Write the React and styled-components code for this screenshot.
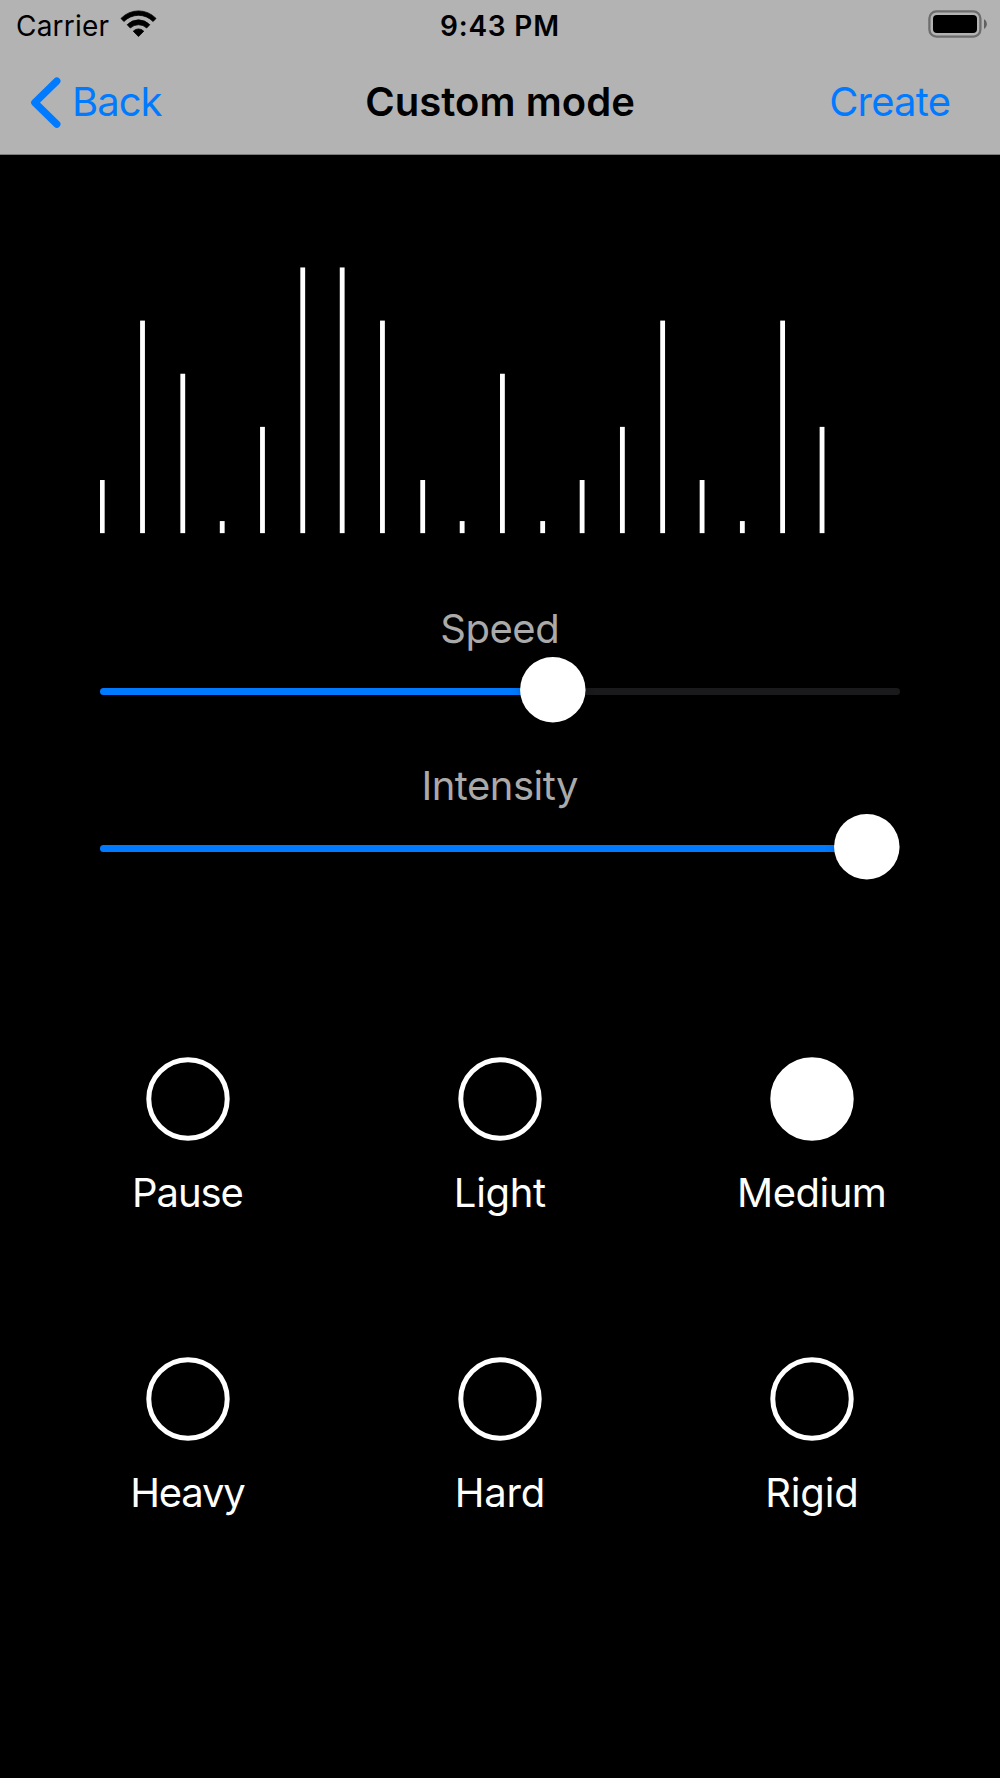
import React, { useState } from "react";
import styled, { createGlobalStyle } from "styled-components";

const GlobalStyle = createGlobalStyle`
  * { box-sizing: border-box; }
  body {
    margin: 0;
    background: #000;
    font-family: "Inter", "Liberation Sans", sans-serif;
  }
  button {
    padding: 0;
    border: 0;
    background: none;
    color: inherit;
    font: inherit;
  }
`;

const Screen = styled.div`
  width: 1000px;
  height: 1778px;
  background: #000;
  overflow: hidden;
`;

/* Text whose trailing letter space is taken back, so that it centres on its glyphs. */
const Text = styled.span`
  display: block;
  font-size: 40px;
  line-height: 49px;
  white-space: nowrap;
  letter-spacing: ${(p) => p.$tracking || 0}px;
  margin-right: ${(p) => -(p.$tracking || 0)}px;
`;

const Header = styled.header`
  height: 155px;
  background: #b3b3b3;
  border-bottom: 1px solid #7c7c7c;
`;

const StatusBar = styled.div`
  display: grid;
  grid-template-columns: 1fr auto 1fr;
  align-items: start;
  height: 50px;
  padding: 9px 13px 0 12px;
  color: #000;
`;

const StatusText = styled(Text)`
  font-size: 28px;
  line-height: 34px;
  font-weight: ${(p) => p.$weight || 400};
`;

const Carrier = styled.div`
  display: flex;
  gap: 11px;
  padding-left: 4px;

  svg {
    margin-top: 1px;
  }
`;

const BatterySlot = styled.div`
  display: flex;
  justify-content: flex-end;
  padding-top: 1px;
`;

const NavBar = styled.nav`
  display: grid;
  grid-template-columns: 1fr auto 1fr;
  align-items: center;
  height: 103px;
  padding: 0 30px;
`;

const NavButton = styled.button`
  display: flex;
  align-items: center;
  justify-self: ${(p) => p.$side};
  gap: 10px;
  margin-right: ${(p) => (p.$side === "end" ? 19 : 0)}px;
  color: #007aff;
`;

const Title = styled(Text)`
  color: #000;
  font-weight: 600;
`;

const Main = styled.main`
  display: flex;
  flex-direction: column;
  padding: 112px 32px 0;
`;

const Chart = styled.svg`
  display: block;
  width: 800px;
  height: 267px;
  margin: 0 68px 70px;
`;

const Controls = styled.section`
  display: flex;
  flex-direction: column;
  gap: 38px;
  margin: 0 68px 177px;
`;

const Control = styled.div`
  display: flex;
  flex-direction: column;
  align-items: center;
  gap: 4px;
`;

const ControlLabel = styled(Text)`
  color: #aaa;
`;

const SliderBox = styled.div`
  position: relative;
  width: 800px;
  height: 66px;
  padding-top: 31px;
`;

const Track = styled.div`
  height: 7px;
  border-radius: 4px;
  background: #1a1a1c;
`;

const Fill = styled.div`
  height: 7px;
  border-radius: 4px;
  background: #007aff;
`;

const Thumb = styled.div`
  position: absolute;
  top: 0;
  width: 66px;
  height: 66px;
  border-radius: 50%;
  background: #fff;
  box-shadow: 0 1px 10px rgba(0, 0, 0, 0.2);
  transform: translate(-0.2px, -0.3px) scale(0.992);
`;

const Options = styled.section`
  display: grid;
  grid-template-columns: repeat(3, 312px);
  row-gap: 140px;
`;

const Option = styled.button`
  display: flex;
  flex-direction: column;
  align-items: center;
  gap: 27px;
  height: 160px;
  color: #fff;
`;

const Ring = styled.span`
  width: 84px;
  height: 84px;
  border: 5px solid #fff;
  border-radius: 50%;
  background: ${(p) => (p.$selected ? "#fff" : "transparent")};
  transform: scale(0.993);
`;

/* One layout point of the 414-point-wide screen is three device pixels. */
const PIXEL = 1000 / 1242;
const BASELINE = 266.15;
const beats = [1, 4, 3, 0, 2, 5, 5, 4, 1, 0, 3, 0, 1, 2, 4, 1, 0, 4, 2];

const options = [
  { name: "Pause", tracking: -1.05 },
  { name: "Light", tracking: -0.3 },
  { name: "Medium", tracking: -0.5 },
  { name: "Heavy", tracking: -1.2 },
  { name: "Hard", tracking: -0.2 },
  { name: "Rigid", tracking: -0.2 },
];

function WifiIcon() {
  return (
    <svg width="37" height="28" viewBox="0 0 38 28" preserveAspectRatio="none">
      <g fill="#000" stroke="#000" strokeWidth="0.8" strokeLinejoin="round">
        <path d="M19 0.9A26.3 26.3 0 0 1 37 8.4L34 11.5A21.3 21.3 0 0 0 4 11.5L1 8.4A26.3 26.3 0 0 1 19 0.9Z" />
        <path d="M19 9.8A17.3 17.3 0 0 1 30.6 14.7L27.4 18A12.4 12.4 0 0 0 10.6 18L7.4 14.7A17.3 17.3 0 0 1 19 9.8Z" />
        <path d="M19 18.9A8 8 0 0 1 24.4 21.2L19 26.6L13.6 21.2A8 8 0 0 1 19 18.9Z" />
      </g>
    </svg>
  );
}

function BatteryIcon() {
  return (
    <svg width="59" height="28" viewBox="0 0 59 28">
      <rect x="1.4" y="1.4" width="51" height="25.2" rx="7" fill="none" stroke="#6d6d6d" strokeWidth="2.3" />
      <rect x="5" y="5" width="44" height="18" rx="4" fill="#000" />
      <path d="M56 9.2C59.8 11 59.8 17.2 56 19Z" fill="#606060" />
    </svg>
  );
}

function ChevronIcon() {
  return (
    <svg width="32" height="52" viewBox="0 0 32 52">
      <path
        d="M26.8 5.1L4.8 26.6L26.8 48.1"
        fill="none"
        stroke="#007aff"
        strokeWidth="7.3"
        strokeLinecap="round"
        strokeLinejoin="round"
      />
    </svg>
  );
}

function BeatChart() {
  return (
    <Chart viewBox="0 0 800 267">
      {beats.map((level, i) => {
        const x = Math.round(124.2 + 49.68 * i) * PIXEL - 100;
        const height = (level ? level * 66 : 15) * PIXEL;
        return (
          <rect key={i} x={x} y={BASELINE - height} width={6 * PIXEL} height={height} fill="#fff" />
        );
      })}
    </Chart>
  );
}

function Slider({ label, value, tracking }) {
  return (
    <Control>
      <ControlLabel $tracking={tracking}>{label}</ControlLabel>
      <SliderBox>
        <Track>
          <Fill style={{ width: `calc(${value} * (100% - 66px) + 30px)` }} />
        </Track>
        <Thumb style={{ left: `calc(${value} * (100% - 66px))` }} />
      </SliderBox>
    </Control>
  );
}

export default function App() {
  const [selected, setSelected] = useState("Medium");
  return (
    <Screen>
      <GlobalStyle />
      <Header>
        <StatusBar>
          <Carrier>
            <StatusText $tracking={0.2}>Carrier</StatusText>
            <WifiIcon />
          </Carrier>
          <StatusText $weight={600} $tracking={0.8}>9:43 PM</StatusText>
          <BatterySlot>
            <BatteryIcon />
          </BatterySlot>
        </StatusBar>
        <NavBar>
          <NavButton $side="start">
            <ChevronIcon />
            <Text $tracking={-0.97}>Back</Text>
          </NavButton>
          <Title $tracking={0.05}>Custom mode</Title>
          <NavButton $side="end">
            <Text $tracking={-0.8}>Create</Text>
          </NavButton>
        </NavBar>
      </Header>
      <Main>
        <BeatChart />
        <Controls>
          <Slider label="Speed" value={0.572} tracking={-0.5} />
          <Slider label="Intensity" value={1} tracking={-0.5} />
        </Controls>
        <Options>
          {options.map(({ name, tracking }) => (
            <Option key={name} onClick={() => setSelected(name)}>
              <Ring $selected={name === selected} />
              <Text $tracking={tracking}>{name}</Text>
            </Option>
          ))}
        </Options>
      </Main>
    </Screen>
  );
}
